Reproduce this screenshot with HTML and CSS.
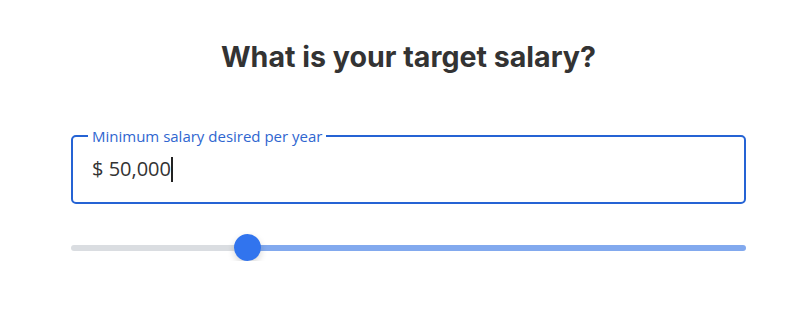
FILE: index.html
```html
<!DOCTYPE html>
<html>
<head>
<meta charset="utf-8">
<link rel="stylesheet" href="styles.css">
</head>
<body>
<main class="wrap">
  <h1 class="title">What is your target salary?</h1>
  <fieldset class="field">
    <legend class="label">Minimum salary desired per year</legend>
    <div class="value">$ 50,000<span class="caret"></span></div>
  </fieldset>
  <div class="slider">
    <div class="track">
      <div class="part-off"></div>
      <div class="part-on"></div>
    </div>
    <div class="thumb"></div>
  </div>
</main>
</body>
</html>
```
FILE: styles.css
```css
html, body { margin: 0; background: #fff; }
.wrap {
  width: 675px;
  margin-left: 71px;
  display: flex;
  flex-direction: column;
}
.title {
  font-family: Inter, "Liberation Sans", sans-serif;
  font-weight: 700;
  font-size: 28.6px;
  color: #333;
  text-align: center;
  margin: 40px 0 0 0;
  line-height: 34px;
}
.field {
  margin: 52px 0 0 0;
  border: 2px solid #2563d4;
  border-radius: 5px;
  padding: 0 15px 19px 15px;
}
.label {
  font-family: "Open Sans", sans-serif;
  font-size: 15px;
  color: #2f66d0;
  padding: 0 4px;
  line-height: 20px;
}
.value {
  font-family: "Open Sans", sans-serif;
  font-size: 20px;
  color: #333;
  padding-left: 4px;
  margin-top: 9px;
  line-height: 28px;
  height: 28px;
  display: flex;
  align-items: center;
}
.caret {
  display: inline-block;
  width: 2px;
  height: 25px;
  background: #222;
  margin-left: 0;
}
.slider {
  position: relative;
  margin-top: 30px;
  height: 27px;
  flex-shrink: 0;
  display: flex;
  align-items: center;
}
.track {
  flex: 1;
  display: flex;
  height: 6px;
  border-radius: 3px;
  overflow: hidden;
}
.part-off { width: 176px; background: #dadde1; }
.part-on { flex: 1; background: #82a9ee; }
.thumb {
  position: absolute;
  z-index: 2;
  left: 163px;
  top: 0;
  width: 27px;
  height: 27px;
  border-radius: 50%;
  background: #3174ee;
  box-shadow: 0 3px 7px rgba(0,0,0,0.16);
}
```
